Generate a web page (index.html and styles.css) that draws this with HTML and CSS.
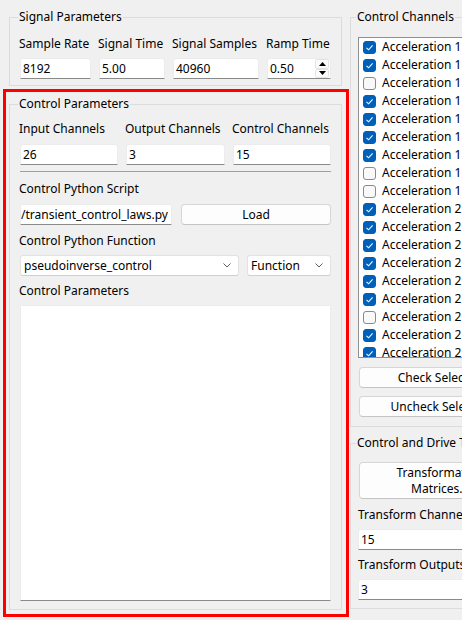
FILE: index.html
```html
<!DOCTYPE html>
<html>
<head>
<meta charset="utf-8">
<link rel="stylesheet" href="styles.css">
</head>
<body>
<div class="window">
  <div class="left">
    <fieldset class="group sig">
      <legend>Signal Parameters</legend>
      <div class="grid4">
        <div class="lbl">Sample Rate</div>
        <div class="lbl">Signal Time</div>
        <div class="lbl">Signal Samples</div>
        <div class="lbl">Ramp Time</div>
        <div class="edit">8192</div>
        <div class="edit">5.00</div>
        <div class="edit">40960</div>
        <div class="edit spin">
          <span class="spintext">0.50</span>
          <div class="arrows">
            <span class="sbtn"><svg width="7" height="4" viewBox="0 0 7 4"><polygon points="0,4 7,4 3.5,0" fill="#000"/></svg></span>
            <span class="sbtn"><svg width="7" height="4" viewBox="0 0 7 4"><polygon points="0,0 7,0 3.5,4" fill="#000"/></svg></span>
          </div>
        </div>
      </div>
    </fieldset>

    <fieldset class="group ctl">
      <legend>Control Parameters</legend>
      <div class="grid3">
        <div class="lbl">Input Channels</div>
        <div class="lbl">Output Channels</div>
        <div class="lbl">Control Channels</div>
        <div class="edit">26</div>
        <div class="edit">3</div>
        <div class="edit">15</div>
      </div>
      <div class="hline"></div>
      <div class="lbl l-script">Control Python Script</div>
      <div class="row-script">
        <div class="edit path"><span>C:/Users/dev/rattlesnake/transient_control_laws.py</span></div>
        <div class="btn load">Load</div>
      </div>
      <div class="lbl l-func">Control Python Function</div>
      <div class="row-func">
        <div class="combo c1"><span>pseudoinverse_control</span><svg class="chev" width="8" height="5" viewBox="0 0 8 5"><polyline points="0.5,0.5 4,4 7.5,0.5" fill="none" stroke="#5f5f5f" stroke-width="1"/></svg></div>
        <div class="combo c2"><span>Function</span><svg class="chev" width="8" height="5" viewBox="0 0 8 5"><polyline points="0.5,0.5 4,4 7.5,0.5" fill="none" stroke="#5f5f5f" stroke-width="1"/></svg></div>
      </div>
      <div class="lbl l-params">Control Parameters</div>
      <div class="textedit"></div>
    </fieldset>
  </div>

  <div class="right">
    <fieldset class="group chans">
      <legend>Control Channels</legend>
      <div class="list">
        <div class="item"><span class="cb on"></span>Acceleration 1 X+</div>
        <div class="item"><span class="cb on"></span>Acceleration 1 Y+</div>
        <div class="item"><span class="cb"></span>Acceleration 1 Z+</div>
        <div class="item"><span class="cb on"></span>Acceleration 1 X-</div>
        <div class="item"><span class="cb on"></span>Acceleration 1 Y-</div>
        <div class="item"><span class="cb on"></span>Acceleration 1 Z-</div>
        <div class="item"><span class="cb on"></span>Acceleration 1 RX</div>
        <div class="item"><span class="cb"></span>Acceleration 1 RY</div>
        <div class="item"><span class="cb"></span>Acceleration 1 RZ</div>
        <div class="item"><span class="cb on"></span>Acceleration 2 X+</div>
        <div class="item"><span class="cb on"></span>Acceleration 2 Y+</div>
        <div class="item"><span class="cb on"></span>Acceleration 2 Z+</div>
        <div class="item"><span class="cb on"></span>Acceleration 2 X-</div>
        <div class="item"><span class="cb on"></span>Acceleration 2 Y-</div>
        <div class="item"><span class="cb on"></span>Acceleration 2 Z-</div>
        <div class="item"><span class="cb"></span>Acceleration 2 RX</div>
        <div class="item"><span class="cb on"></span>Acceleration 2 RY</div>
        <div class="item"><span class="cb on"></span>Acceleration 2 RZ</div>
      </div>
      <div class="btn wide b-check">Check Selected</div>
      <div class="btn wide b-uncheck">Uncheck Selected</div>
    </fieldset>

    <fieldset class="group drive">
      <legend>Control and Drive Transforms</legend>
      <div class="btn wide tall">Transformation<br>Matrices...</div>
      <div class="lbl l-tc">Transform Channels</div>
      <div class="edit r-edit">15</div>
      <div class="lbl l-to">Transform Outputs</div>
      <div class="edit r-edit">3</div>
    </fieldset>
  </div>

  <div class="highlight"></div>
</div>
</body>
</html>
```

FILE: styles.css
```css
html, body {
  margin: 0;
  padding: 0;
  background: #f0f0f0;
  overflow: hidden;
  width: 462px;
  height: 620px;
}

body {
  font-family: "Noto Sans", "Liberation Sans", sans-serif;
  font-size: 12px;
  line-height: 16px;
  color: #000;
}

.window {
  position: relative;
  display: flex;
  align-items: flex-start;
  padding: 9px 0 0 9px;
  width: 700px;
  height: 620px;
  box-sizing: border-box;
}

.left {
  width: 333px;
  flex-shrink: 0;
  display: flex;
  flex-direction: column;
}

.right {
  width: 180px;
  flex-shrink: 0;
  margin-left: 8px;
  display: flex;
  flex-direction: column;
}

fieldset.group {
  margin: 0;
  border: 1px solid #dcdcdc;
  min-width: 0;
  box-sizing: border-box;
}

fieldset.group legend {
  font-size: 12px;
  line-height: 16px;
  padding: 0 1px;
  margin-left: -2px;
  white-space: nowrap;
}

.sig {
  padding: 11px 10px 6px 10px;
}

.ctl {
  margin-top: 10px !important;
  padding: 9px 10px 8px 10px;
}

.lbl {
  white-space: nowrap;
  height: 16px;
  margin-left: -1px;
}

.grid4 {
  display: grid;
  grid-template-columns: 71px 66px 86px 64px;
  column-gap: 8px;
  row-gap: 6px;
}

.grid3 {
  display: grid;
  grid-template-columns: 98px 99px 98px;
  column-gap: 8px;
  row-gap: 7px;
}

.edit {
  background: #fff;
  border: 1px solid #ececec;
  border-bottom: 1px solid #8a8a8a;
  border-radius: 3px 3px 0 0;
  height: 21px;
  box-sizing: border-box;
  padding: 0 2px;
  line-height: 19px;
  white-space: nowrap;
  overflow: hidden;
}

.spin {
  display: flex;
  justify-content: space-between;
  padding-right: 0;
}

.arrows {
  display: flex;
  flex-direction: column;
  width: 14px;
  margin: 0 1px 0 0;
}

.sbtn {
  flex: 1;
  display: flex;
  align-items: center;
  justify-content: center;
  border: 1px solid #e4e4e4;
  border-radius: 2px;
  background: #fbfbfb;
  box-sizing: border-box;
}

.hline {
  height: 1px;
  background: #a0a0a0;
  margin: 6px 0 0 0;
}

.l-script {
  margin-top: 9px;
}

.row-script {
  display: flex;
  margin-top: 7px;
  gap: 9px;
}

.path {
  width: 152px;
  display: flex;
  justify-content: flex-end;
  padding: 0 3px 0 0;
}

.btn {
  background: #fdfdfd;
  border: 1px solid #d6d6d6;
  border-bottom-color: #c4c4c4;
  border-radius: 4px;
  box-sizing: border-box;
  text-align: center;
  white-space: nowrap;
}

.load {
  width: 150px;
  height: 21px;
  line-height: 19px;
}

.l-func {
  margin-top: 8px;
}

.row-func {
  display: flex;
  margin-top: 6px;
  gap: 8px;
}

.combo {
  background: #fff;
  border: 1px solid #e2e2e2;
  border-bottom-color: #cfcfcf;
  border-radius: 3px;
  height: 21px;
  box-sizing: border-box;
  display: flex;
  align-items: center;
  justify-content: space-between;
  padding: 0 7px 0 3px;
  line-height: 19px;
  white-space: nowrap;
}

.c1 {
  width: 219px;
}

.c2 {
  width: 84px;
}

.l-params {
  margin-top: 7px;
}

.textedit {
  margin-top: 6px;
  height: 296px;
  background: #fff;
  border: 1px solid #ececec;
  border-bottom: 1px solid #8a8a8a;
  box-sizing: border-box;
}

.chans {
  padding: 12px 7px 9px 7px;
  margin-top: 0 !important;
}

.list {
  height: 321px;
  background: #fff;
  border: 1px solid #8f8f8f;
  border-right: none;
  box-sizing: border-box;
  overflow: hidden;
}

.item {
  height: 18px;
  display: flex;
  align-items: center;
  padding-left: 4px;
  white-space: nowrap;
}

.cb {
  width: 13px;
  height: 13px;
  box-sizing: border-box;
  border: 1px solid #8a8a8a;
  border-radius: 3px;
  background: #f9f9f9;
  margin-right: 6px;
  flex-shrink: 0;
}

.cb.on {
  border-color: #005fb8;
  background: #005fb8 url("data:image/svg+xml,%3Csvg xmlns='http://www.w3.org/2000/svg' width='11' height='11' viewBox='0 0 11 11'%3E%3Cpolyline points='2.5,5.8 4.6,7.8 8.6,3.4' fill='none' stroke='white' stroke-width='1.1'/%3E%3C/svg%3E") center / 11px 11px no-repeat;
}

.wide {
  margin-left: 1px;
  width: 162px;
  height: 21px;
  line-height: 19px;
}

.b-check {
  margin-top: 9px;
}

.b-uncheck {
  margin-top: 8px;
}

.drive {
  margin-top: 8px !important;
  padding: 11px 7px 8px 7px;
}

.tall {
  height: 37px;
  line-height: 16px;
  padding-top: 2px;
}

.l-tc {
  margin-top: 8px;
  margin-left: 0;
}

.l-to {
  margin-top: 7px;
  margin-left: 0;
}

.r-edit {
  margin-top: 6px;
  width: 164px;
}

.highlight {
  position: absolute;
  left: 3px;
  top: 89px;
  width: 346px;
  height: 528px;
  border: 3px solid #ff0000;
  box-sizing: border-box;
  pointer-events: none;
}
```
